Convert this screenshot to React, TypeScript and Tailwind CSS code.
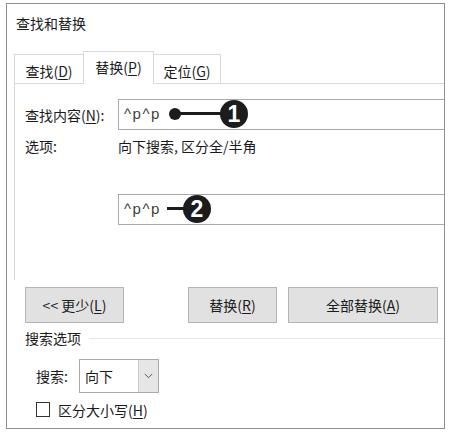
import React from "react";

const cjk = { fontFamily: '"Noto Sans CJK SC", "Noto Sans", sans-serif' };
const latin = { fontFamily: '"Liberation Sans", Arial, sans-serif' };

function U({ children }: { children: React.ReactNode }) {
  return <span className="underline underline-offset-2">{children}</span>;
}

export default function App() {
  return (
    <div className="relative w-[449px] h-[433px] bg-white overflow-hidden text-[14px] text-[#1b1b1b]" style={cjk}>
      <div className="ml-[6px] mt-[3px] w-[439px] h-[426px] border border-[#8e8e8e] overflow-hidden flex flex-col">
        {/* title */}
        <div className="pl-[9px] pt-[9px] h-[29px] leading-[20px]">查找和替换</div>

        {/* tabs */}
        <div className="mt-[18px] pl-[7px] flex items-end h-[32px]">
          <div className="w-[69px] h-[29px] border-l border-t border-[#d9d9d9] flex items-center justify-center pt-[3px] leading-[20px]">
            查找(<U>D</U>)
          </div>
          <div className="relative z-10 w-[71px] h-[33px] -mb-px bg-white border-l border-t border-r border-[#d9d9d9] flex items-center justify-center pb-[2px] leading-[20px]">
            替换(<U>P</U>)
          </div>
          <div className="w-[67px] h-[29px] border-t border-r border-[#d9d9d9] flex items-center justify-center pt-[3px] leading-[20px]">
            定位(<U>G</U>)
          </div>
        </div>

        {/* panel */}
        <div className="ml-[7px] w-[470px] h-[197px] border-t border-l border-[#d9d9d9] flex flex-col pl-[10px] pt-[15px]">
          <div className="flex items-center h-[31px]">
            <div className="w-[93px] leading-[20px]">查找内容(<U>N</U>):</div>
            <div className="flex-1 h-[31px] border border-[#a9a9a9] flex items-center pl-[5px] text-[#404040] text-[15px] tracking-[1.5px]" style={latin}>
              ^p^p
            </div>
          </div>
          <div className="flex items-center h-[20px] mt-[6px] leading-[20px]">
            <div className="w-[93px]">选项:</div>
            <div>向下搜索, 区分全/半角</div>
          </div>
          <div className="flex items-center h-[31px] mt-[38px]">
            <div className="w-[93px]" />
            <div className="flex-1 h-[31px] border border-[#a9a9a9] flex items-center pl-[5px] text-[#404040] text-[15px] tracking-[1.5px]" style={latin}>
              ^p^p
            </div>
          </div>
        </div>

        {/* buttons */}
        <div className="flex mt-[7px] pl-[18px]">
          <div className="w-[99px] h-[36px] bg-[#e1e1e1] border border-[#b4b4b4] flex items-center justify-center leading-[20px]">
            &lt;&lt;&nbsp;更少(<U>L</U>)
          </div>
          <div className="ml-[64px] w-[89px] h-[36px] bg-[#e1e1e1] border border-[#b4b4b4] flex items-center justify-center leading-[20px]">
            替换(<U>R</U>)
          </div>
          <div className="ml-[11px] w-[150px] h-[36px] bg-[#e1e1e1] border border-[#b4b4b4] flex items-center justify-center leading-[20px]">
            全部替换(<U>A</U>)
          </div>
        </div>

        {/* search options */}
        <div className="flex items-center mt-[5px] pl-[18px] h-[20px] leading-[20px]">
          <span>搜索选项</span>
          <div className="flex-1 h-px bg-[#e6e6e6] ml-[8px]" />
        </div>

        <div className="flex items-center mt-[11px] pl-[29px] h-[34px]">
          <div className="w-[43px] leading-[20px]">搜索:</div>
          <div className="w-[80px] h-[34px] border border-[#a9a9a9] flex">
            <div className="flex-1 flex items-center pl-[5px] leading-[20px]">向下</div>
            <div className="w-[20px] bg-[#e6e6e6] border-l border-[#c8c8c8] flex items-center justify-center">
              <svg width="9" height="6" viewBox="0 0 9 6">
                <path d="M0.8 1 L4.5 4.7 L8.2 1" fill="none" stroke="#555" strokeWidth="1" />
              </svg>
            </div>
          </div>
        </div>

        <div className="flex items-center mt-[9px] pl-[29px] h-[15px]">
          <div className="w-[14px] h-[15px] border border-[#333] bg-white" />
          <div className="ml-[8px] leading-[20px]">区分大小写(<U>H</U>)</div>
        </div>
      </div>

      {/* callout 1 */}
      <div className="absolute left-[169px] top-[108px] w-[12px] h-[12px] rounded-full bg-[#1c1c1c]" />
      <div className="absolute left-[176px] top-[112px] w-[46px] h-[3px] bg-[#1c1c1c]" />
      <div
        className="absolute left-[220px] top-[100px] w-[28px] h-[28px] rounded-full bg-[#1c1c1c] text-white flex items-center justify-center text-[23px] font-bold leading-none"
        style={latin}
      >
        1
      </div>

      {/* callout 2 */}
      <div className="absolute left-[167px] top-[207px] w-[20px] h-[3px] bg-[#1c1c1c]" />
      <div
        className="absolute left-[183px] top-[195px] w-[28px] h-[28px] rounded-full bg-[#1c1c1c] text-white flex items-center justify-center text-[23px] font-bold leading-none"
        style={latin}
      >
        2
      </div>
    </div>
  );
}
